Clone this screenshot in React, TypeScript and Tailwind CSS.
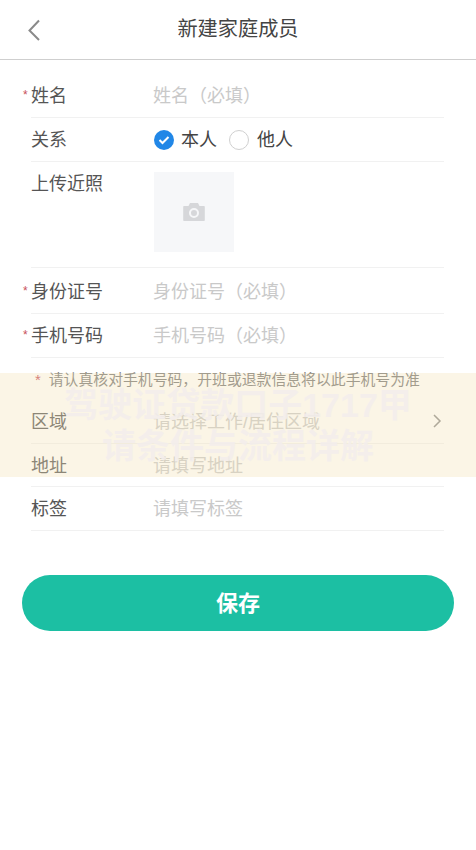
import React from 'react';

const font = "font-['Liberation_Sans','Noto_Sans_CJK_SC',sans-serif]";

const Row: React.FC<{ label: string; required?: boolean; size: string; children: React.ReactNode; }> = ({ label, required, size, children }) => (
  <div className={`relative flex items-center border-b border-[#f1f1f1] ${size}`}>
    <div className="relative w-[122px] shrink-0 text-[18px] text-[#555555]">
      {required && <span className="absolute left-[-8px] top-[6px] text-[12px] leading-[12px] text-[#c8505a]">*</span>}
      {label}
    </div>
    {children}
  </div>
);

const Hint: React.FC<{ text: string }> = ({ text }) => (
  <div className="text-[18px] text-[#c9c9c9]">{text}</div>
);

const App: React.FC = () => {
  return (
    <div className={`relative h-[850px] w-[476px] overflow-hidden bg-white ${font}`}>
      <header className="relative flex h-[60px] items-center justify-center border-b border-[#cfcfcf]">
        <svg className="absolute left-[26px] top-[18px]" width="16" height="24" viewBox="0 0 16 24" fill="none">
          <path d="M13 2.500 3.500 12.500 13 22" stroke="#8a8a8a" strokeWidth="2" />
        </svg>
        <h1 className="text-[20.2px] font-normal text-[#444444]">新建家庭成员</h1>
      </header>

      <div className="ml-[31px] mr-[32px] mt-[14px]">
        <Row label="姓名" required size="h-[44px] pt-[2px]"><Hint text="姓名（必填）" /></Row>
        <Row label="关系" size="h-[44px] pt-[2px]">
          <div className="flex items-center text-[18px] text-[#444444]">
            <span className="ml-[1px] flex h-[20px] w-[20px] -translate-y-[1px] items-center justify-center rounded-full bg-[#2187e7]">
              <svg width="12" height="10" viewBox="0 0 12 10" fill="none"><path d="M1.500 5 4.500 8 10.500 2" stroke="#ffffff" strokeWidth="2" /></svg>
            </span>
            <span className="ml-[7px]">本人</span>
            <span className="ml-[12px] h-[20px] w-[20px] -translate-y-[1px] rounded-full border border-[#d0d0d0]" />
            <span className="ml-[8px]">他人</span>
          </div>
        </Row>
        <div className="flex h-[106px] border-b border-[#f1f1f1] pt-[10px]">
          <div className="w-[123px] shrink-0 text-[18px] leading-[24px] text-[#555555]">上传近照</div>
          <div className="flex h-[80px] w-[80px] items-center justify-center bg-[#f6f7f9]">
            <svg width="22" height="20" viewBox="0 0 22 20">
              <path fillRule="evenodd" fill="#d6d7da" d="M7 1h8l1.500 3H21a.8.8 0 0 1 .8.8v13.400a.8.8 0 0 1-.8.8H1a.8.8 0 0 1-.8-.8V4.800A.8.8 0 0 1 1 4h4.500L7 1Zm4 5a5 5 0 1 0 0 10 5 5 0 0 0 0-10Zm0 2a3 3 0 1 1 0 6 3 3 0 0 1 0-6Z" />
            </svg>
          </div>
        </div>
        <Row label="身份证号" required size="h-[46px] pt-[4px]"><Hint text="身份证号（必填）" /></Row>
        <Row label="手机号码" required size="h-[44px] pt-[2px]"><Hint text="手机号码（必填）" /></Row>
        <div className="flex h-[42px] items-center pt-[2px] text-[14.85px] text-[#777777]">
          <span className="ml-[4px] text-[#c8505a]">*</span>
          <span className="ml-[8px] whitespace-nowrap">请认真核对手机号码，开班或退款信息将以此手机号为准</span>
        </div>
        <Row label="区域" size="h-[44px] pt-[2px]">
          <Hint text="请选择工作/居住区域" />
          <svg className="absolute right-[2px] top-[13px]" width="10" height="16" viewBox="0 0 10 16" fill="none">
            <path d="M2 2 8 8 2 14" stroke="#8a8a8a" strokeWidth="1.500" />
          </svg>
        </Row>
        <Row label="地址" size="h-[43px] pt-[2px]"><Hint text="请填写地址" /></Row>
        <Row label="标签" size="h-[44px] pt-[2px]"><Hint text="请填写标签" /></Row>
      </div>

      <div className="mx-[22px] mt-[44px]">
        <button className="flex h-[56px] w-full items-center justify-center rounded-full bg-[#1cbfa3] pt-[1px] text-[22px] font-bold text-white">保存</button>
      </div>

      {/* ad strip lying over the form */}
      <div className="absolute left-0 top-[373px] flex h-[104px] w-full flex-col items-center justify-center bg-[#f4e2b8]/35 pt-[2px] text-[34px] font-bold leading-[41px] text-[#f3eeec]/90">
        <div className="whitespace-nowrap">驾驶证贷款口子1717甲</div>
        <div className="whitespace-nowrap">请条件与流程详解</div>
      </div>
    </div>
  );
};

export default App;
